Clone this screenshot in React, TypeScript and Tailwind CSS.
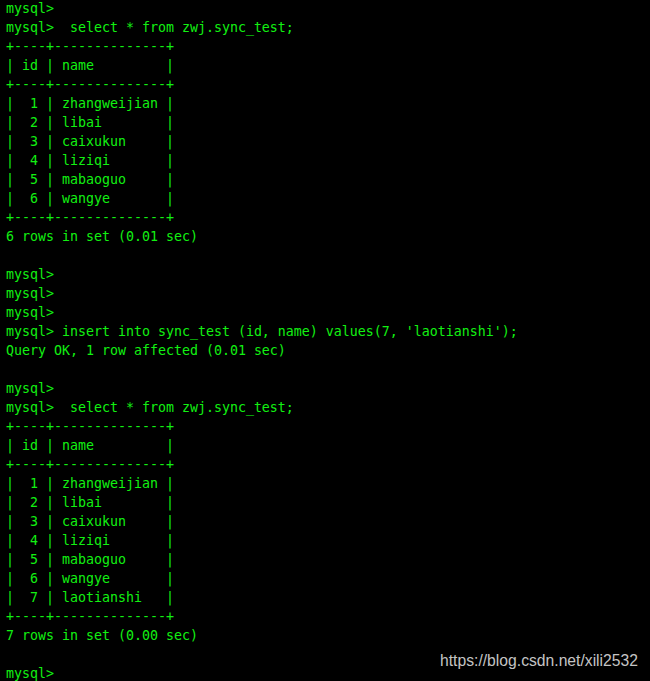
const border = "+----+--------------+"

const table = (rows: string[]) => [
  border,
  "| id | name         |",
  border,
  ...rows.map((name, i) => `|  ${i + 1} | ${name.padEnd(12, " ")} |`),
  border,
]

const firstNames = ["zhangweijian", "libai", "caixukun", "liziqi", "mabaoguo", "wangye"]

const lines: string[] = [
  "mysql>",
  "mysql>  select * from zwj.sync_test;",
  ...table(firstNames),
  "6 rows in set (0.01 sec)",
  "",
  "mysql>",
  "mysql>",
  "mysql>",
  "mysql> insert into sync_test (id, name) values(7, 'laotianshi');",
  "Query OK, 1 row affected (0.01 sec)",
  "",
  "mysql>",
  "mysql>  select * from zwj.sync_test;",
  ...table([...firstNames, "laotianshi"]),
  "7 rows in set (0.00 sec)",
  "",
  "mysql>",
]

export default function App() {
  return (
    <div className="relative h-[681px] w-[650px] overflow-hidden bg-black">
      <pre className="m-0 -mt-[1px] px-[6px] font-['DejaVu_Sans_Mono','Liberation_Mono',monospace] text-[13.29px] leading-[19px] text-[#12f012]">
        {lines.map((l, i) => (
          <div key={i} className="h-[19px] whitespace-pre">{l}</div>
        ))}
      </pre>
      <div className="absolute right-[12px] bottom-[8px] font-['Liberation_Sans',Arial,sans-serif] text-[15.7px] text-[#c4c4c4]">
        https://blog.csdn.net/xili2532
      </div>
    </div>
  )
}
